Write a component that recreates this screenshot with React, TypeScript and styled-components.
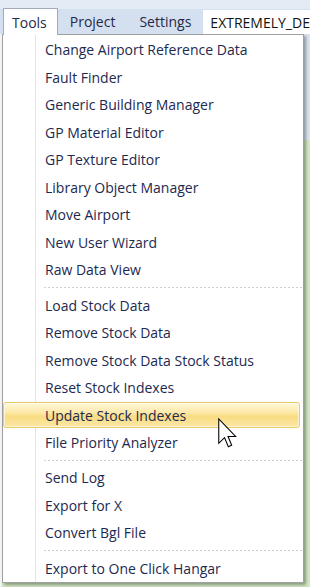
import React from "react";
import styled, { createGlobalStyle, css } from "styled-components";

const GlobalStyle = createGlobalStyle`
  html, body {
    margin: 0;
    padding: 0;
    background: #ffffff;
  }
`;

type Entry = { label: string; active?: boolean } | "sep";

const entries: Entry[] = [
  { label: "Change Airport Reference Data" },
  { label: "Fault Finder" },
  { label: "Generic Building Manager" },
  { label: "GP Material Editor" },
  { label: "GP Texture Editor" },
  { label: "Library Object Manager" },
  { label: "Move Airport" },
  { label: "New User Wizard" },
  { label: "Raw Data View" },
  "sep",
  { label: "Load Stock Data" },
  { label: "Remove Stock Data" },
  { label: "Remove Stock Data Stock Status" },
  { label: "Reset Stock Indexes" },
  { label: "Update Stock Indexes", active: true },
  { label: "File Priority Analyzer" },
  "sep",
  { label: "Send Log" },
  { label: "Export for X" },
  { label: "Convert Bgl File" },
  "sep",
  { label: "Export to One Click Hangar" },
];

const Screen = styled.div`
  position: relative;
  width: 310px;
  height: 587px;
  overflow: hidden;
  font-family: "Open Sans", "Noto Sans", sans-serif;
  background: #ffffff;
`;

const MenuBar = styled.div`
  display: flex;
  align-items: flex-end;
  height: 34px;
  padding-left: 3px;
  background: linear-gradient(#e4ebf5 0 9px, #d4dff0 9px);
  position: relative;
  z-index: 2;
`;

const MenuTab = styled.div<{ $open?: boolean }>`
  height: 25px;
  padding: 0 12px;
  display: flex;
  align-items: center;
  font-size: 14px;
  color: #1f2a48;
  ${({ $open }) =>
    $open &&
    css`
      padding: 0 10px 0 8px;
      background: #ffffff;
      border: 1px solid #a3abb8;
      border-bottom: none;
      height: 26px;
      margin-bottom: -1px;
    `}
`;

const DocTab = styled.div`
  margin-left: auto;
  width: 100px;
  height: 24px;
  padding-left: 7px;
  display: flex;
  align-items: center;
  background: #ffffff;
  font-size: 14px;
  color: #111111;
  white-space: nowrap;
  overflow: hidden;
`;

const Workspace = styled.div`
  display: flex;
  height: 553px;
  background: linear-gradient(#dae4f0 0 106px, #d2e9c3 106px);
`;

const LeftStrip = styled.div`
  width: 2px;
  background: #f4f4f4;
`;

const Dropdown = styled.div`
  width: 300px;
  height: 546px;
  border: 1px solid #a0a0a0;
  padding-top: 1px;
  background: linear-gradient(
    to right,
    #ffffff 0 32px,
    #e2e3e3 32px 33px,
    #ffffff 33px
  );
  box-shadow: 2px 2px 3px rgba(0, 0, 0, 0.35);
  display: flex;
  flex-direction: column;
`;

const Item = styled.div<{ $active?: boolean }>`
  height: 27.6px;
  display: flex;
  align-items: center;
  padding-left: 42px;
  font-size: 14px;
  color: #1d2950;
  white-space: nowrap;
  box-sizing: border-box;
  ${({ $active }) =>
    $active &&
    css`
      margin: 1px 3px 1px 0;
      height: 25.6px;
      padding-left: 41px;
      border: 1px solid #e9c86a;
      border-radius: 3px;
      background: linear-gradient(
        #fff6d6 0%,
        #fde9a8 40%,
        #f9dc82 55%,
        #fbe7a6 100%
      );
      box-shadow: inset 0 0 0 1px rgba(255, 255, 255, 0.6);
    `}
`;

const Separator = styled.div`
  height: 8px;
  display: flex;
  align-items: center;
  padding-left: 41px;

  &::after {
    content: "";
    flex: 1;
    height: 1px;
    background: repeating-linear-gradient(
      to right,
      #cfcfcf 0 2px,
      transparent 2px 4px
    );
  }
`;

const Cursor = styled.svg`
  position: absolute;
  left: 218px;
  top: 418px;
  z-index: 5;
`;

const App: React.FC = () => {
  return (
    <Screen>
      <GlobalStyle />
      <MenuBar>
        <MenuTab $open>Tools</MenuTab>
        <MenuTab>Project</MenuTab>
        <MenuTab>Settings</MenuTab>
        <DocTab>EXTREMELY_DE</DocTab>
      </MenuBar>
      <Workspace>
        <LeftStrip />
        <Dropdown>
          {entries.map((entry, i) =>
            entry === "sep" ? (
              <Separator key={i} />
            ) : (
              <Item key={i} $active={entry.active}>
                {entry.label}
              </Item>
            )
          )}
        </Dropdown>
      </Workspace>
      <Cursor width="19" height="30" viewBox="0 0 12.5 19.5">
        <path
          d="M0.5 0.5 L0.5 16.5 L4.3 12.8 L6.8 18.8 L9 17.8 L6.6 12 L11.6 12 Z"
          fill="#ffffff"
          stroke="#000000"
          strokeWidth="0.7"
          strokeLinejoin="miter"
        />
      </Cursor>
    </Screen>
  );
};

export default App;
